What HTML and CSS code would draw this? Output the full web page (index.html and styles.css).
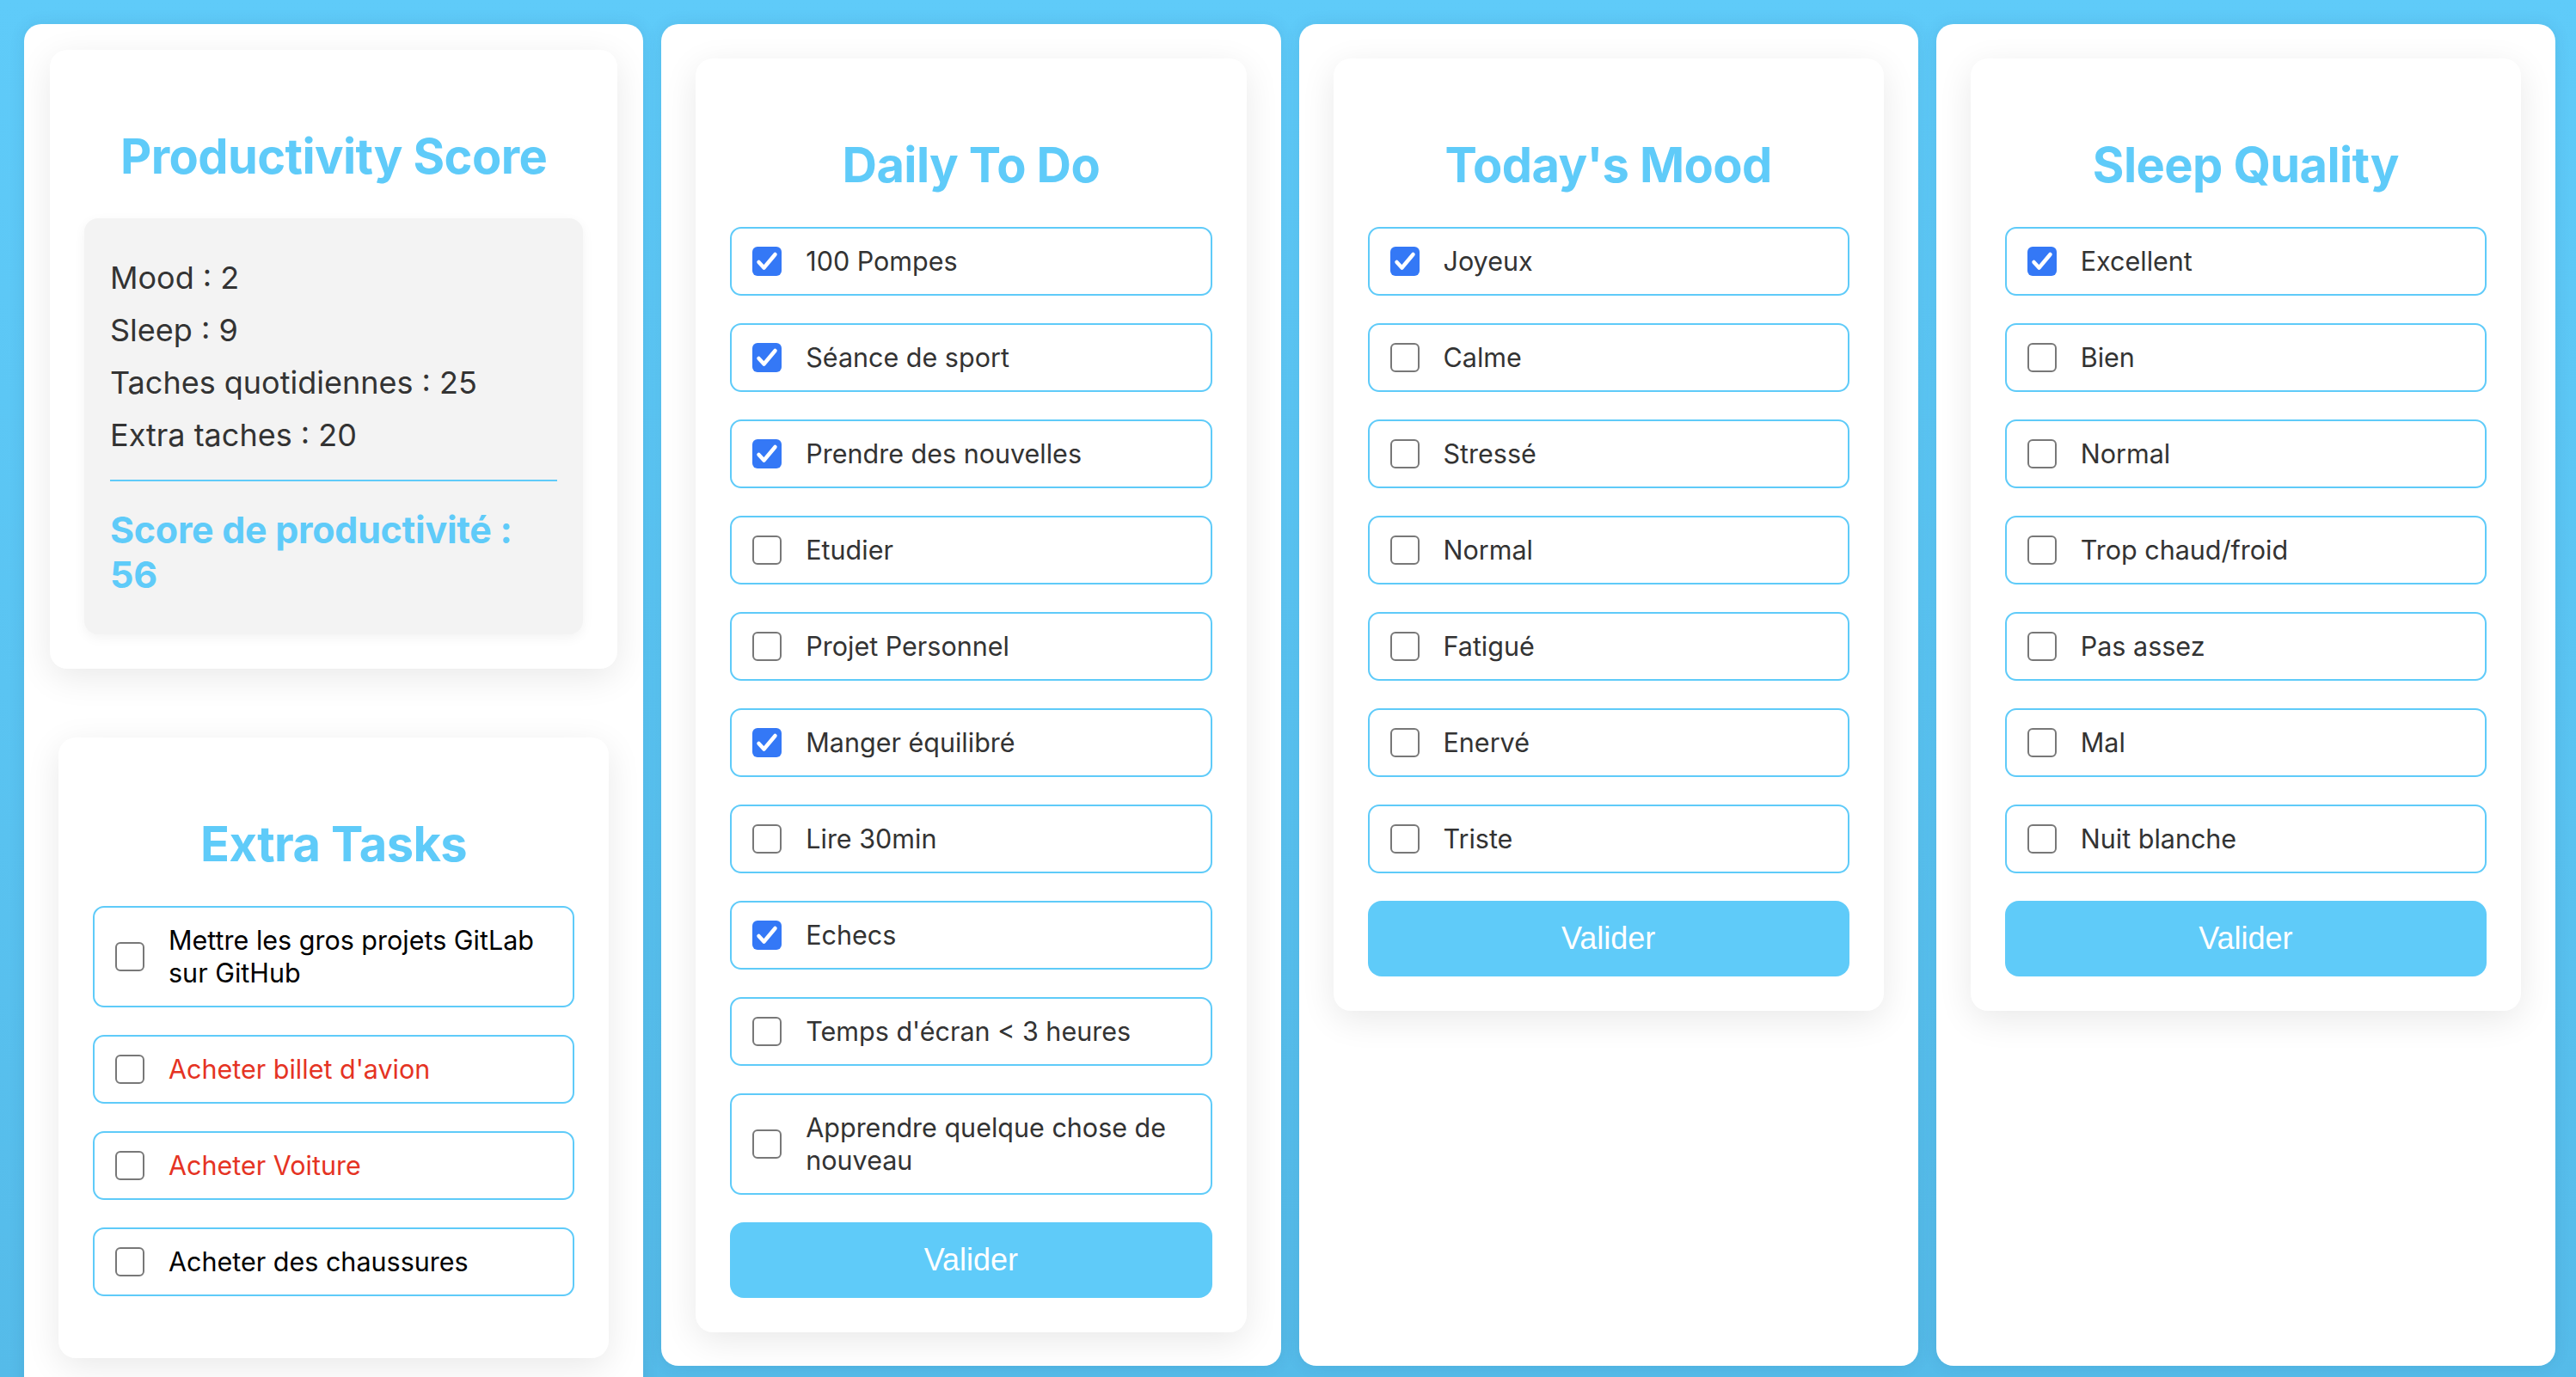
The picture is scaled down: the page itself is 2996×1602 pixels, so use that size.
FILE: index.html
```html
<!DOCTYPE html>
<html lang="fr">
<head>
<meta charset="utf-8">
<title>Dashboard</title>
<link rel="stylesheet" href="styles.css">
</head>
<body>
<div class="page">
  <div class="board">
    <section class="panel panel-first">
      <div class="card card-score">
        <h2 class="card-title">Productivity Score</h2>
        <div class="score-box">
          <p class="score-line">Mood : 2</p>
          <p class="score-line">Sleep : 9</p>
          <p class="score-line">Taches quotidiennes : 25</p>
          <p class="score-line">Extra taches : 20</p>
          <div class="score-divider"></div>
          <h3 class="score-total">Score de productivité :<br>56</h3>
        </div>
      </div>
      <div class="card card-extra">
        <h2 class="card-title">Extra Tasks</h2>
        <label class="item item-black"><span class="box"></span><span class="item-text">Mettre les gros projets GitLab<br>sur GitHub</span></label>
        <label class="item item-red"><span class="box"></span><span class="item-text">Acheter billet d'avion</span></label>
        <label class="item item-red"><span class="box"></span><span class="item-text">Acheter Voiture</span></label>
        <label class="item item-black"><span class="box"></span><span class="item-text">Acheter des chaussures</span></label>
      </div>
    </section>

    <section class="panel">
      <div class="card">
        <h2 class="card-title">Daily To Do</h2>
        <label class="item"><span class="box checked"><svg viewBox="0 0 34 34"><path d="M7.5 18 L13.5 24.5 L26.5 9"/></svg></span><span class="item-text">100 Pompes</span></label>
        <label class="item"><span class="box checked"><svg viewBox="0 0 34 34"><path d="M7.5 18 L13.5 24.5 L26.5 9"/></svg></span><span class="item-text">Séance de sport</span></label>
        <label class="item"><span class="box checked"><svg viewBox="0 0 34 34"><path d="M7.5 18 L13.5 24.5 L26.5 9"/></svg></span><span class="item-text">Prendre des nouvelles</span></label>
        <label class="item"><span class="box"></span><span class="item-text">Etudier</span></label>
        <label class="item"><span class="box"></span><span class="item-text">Projet Personnel</span></label>
        <label class="item"><span class="box checked"><svg viewBox="0 0 34 34"><path d="M7.5 18 L13.5 24.5 L26.5 9"/></svg></span><span class="item-text">Manger équilibré</span></label>
        <label class="item"><span class="box"></span><span class="item-text">Lire 30min</span></label>
        <label class="item"><span class="box checked"><svg viewBox="0 0 34 34"><path d="M7.5 18 L13.5 24.5 L26.5 9"/></svg></span><span class="item-text">Echecs</span></label>
        <label class="item"><span class="box"></span><span class="item-text">Temps d'écran &lt; 3 heures</span></label>
        <label class="item"><span class="box"></span><span class="item-text">Apprendre quelque chose de<br>nouveau</span></label>
        <button class="btn" type="button">Valider</button>
      </div>
    </section>

    <section class="panel">
      <div class="card">
        <h2 class="card-title">Today's Mood</h2>
        <label class="item"><span class="box checked"><svg viewBox="0 0 34 34"><path d="M7.5 18 L13.5 24.5 L26.5 9"/></svg></span><span class="item-text">Joyeux</span></label>
        <label class="item"><span class="box"></span><span class="item-text">Calme</span></label>
        <label class="item"><span class="box"></span><span class="item-text">Stressé</span></label>
        <label class="item"><span class="box"></span><span class="item-text">Normal</span></label>
        <label class="item"><span class="box"></span><span class="item-text">Fatigué</span></label>
        <label class="item"><span class="box"></span><span class="item-text">Enervé</span></label>
        <label class="item"><span class="box"></span><span class="item-text">Triste</span></label>
        <button class="btn" type="button">Valider</button>
      </div>
    </section>

    <section class="panel">
      <div class="card">
        <h2 class="card-title">Sleep Quality</h2>
        <label class="item"><span class="box checked"><svg viewBox="0 0 34 34"><path d="M7.5 18 L13.5 24.5 L26.5 9"/></svg></span><span class="item-text">Excellent</span></label>
        <label class="item"><span class="box"></span><span class="item-text">Bien</span></label>
        <label class="item"><span class="box"></span><span class="item-text">Normal</span></label>
        <label class="item"><span class="box"></span><span class="item-text">Trop chaud/froid</span></label>
        <label class="item"><span class="box"></span><span class="item-text">Pas assez</span></label>
        <label class="item"><span class="box"></span><span class="item-text">Mal</span></label>
        <label class="item"><span class="box"></span><span class="item-text">Nuit blanche</span></label>
        <button class="btn" type="button">Valider</button>
      </div>
    </section>
  </div>
</div>
</body>
</html>
```

FILE: styles.css
```css
html, body {
  margin: 0;
  padding: 0;
}

body {
  font-family: Inter, "Noto Sans", "Liberation Sans", sans-serif;
  color: #333333;
}

.page {
  height: 100vh;
  overflow: hidden;
  background: linear-gradient(to bottom, #5fcbf9 0%, #5ac4f2 50%, #55bbe9 100%);
}

.board {
  display: grid;
  grid-template-columns: repeat(4, minmax(0, 1fr));
  align-items: start;
  column-gap: 21px;
  padding: 28px 24px 0 28px;
}

.panel {
  box-sizing: border-box;
  height: 1561px;
  background: #ffffff;
  border-radius: 20px;
  padding: 40px;
  box-shadow: 0 0 18px rgba(0, 60, 100, 0.10);
}

.panel-first {
  height: 1700px;
  padding: 30px;
}

.card {
  background: #ffffff;
  border-radius: 20px;
  padding: 40px;
  box-shadow: 0 10px 40px rgba(0, 0, 0, 0.09);
}

.card-extra {
  margin: 80px 10px 0;
}

.card-title {
  margin: 50px 0 38px;
  font-size: 56px;
  font-weight: 700;
  line-height: normal;
  letter-spacing: -0.6px;
  color: #5fcbf9;
  text-align: center;
}

.score-box {
  background: #f3f3f3;
  border-radius: 16px;
  padding: 30px;
  box-shadow: 0 4px 14px rgba(0, 0, 0, 0.05);
}

.score-line {
  margin: 17px 0;
  font-size: 36px;
  line-height: 44px;
  color: #333333;
}

.score-divider {
  margin-top: 30px;
  border-top: 2px solid #5fcbf9;
}

.score-total {
  margin: 30px 0 14px;
  font-size: 43px;
  font-weight: 700;
  line-height: 52px;
  letter-spacing: -0.3px;
  color: #5fcbf9;
}

.item {
  display: flex;
  align-items: center;
  box-sizing: border-box;
  margin-bottom: 32px;
  padding: 19px 24px;
  border: 2px solid #5fcbf9;
  border-radius: 13px;
  background: #ffffff;
}

.box {
  flex: 0 0 auto;
  box-sizing: border-box;
  width: 34px;
  height: 34px;
  margin-right: 28px;
  border: 2.5px solid #787878;
  border-radius: 6px;
  background: #ffffff;
  display: flex;
  align-items: center;
  justify-content: center;
}

.box.checked {
  border: none;
  background: #3478f6;
}

.box svg {
  width: 34px;
  height: 34px;
  display: block;
}

.box svg path {
  fill: none;
  stroke: #ffffff;
  stroke-width: 4.5;
  stroke-linecap: round;
  stroke-linejoin: round;
}

.item-text {
  font-size: 30.5px;
  line-height: 38px;
  color: #333333;
}

.item-black .item-text {
  color: #000000;
}

.item-red .item-text {
  color: #e53323;
}

.btn {
  display: block;
  width: 100%;
  height: 88px;
  border: none;
  border-radius: 16px;
  background: #5fcbf9;
  color: #ffffff;
  font-family: "Liberation Sans", Arial, sans-serif;
  font-size: 36px;
  cursor: pointer;
}
```
